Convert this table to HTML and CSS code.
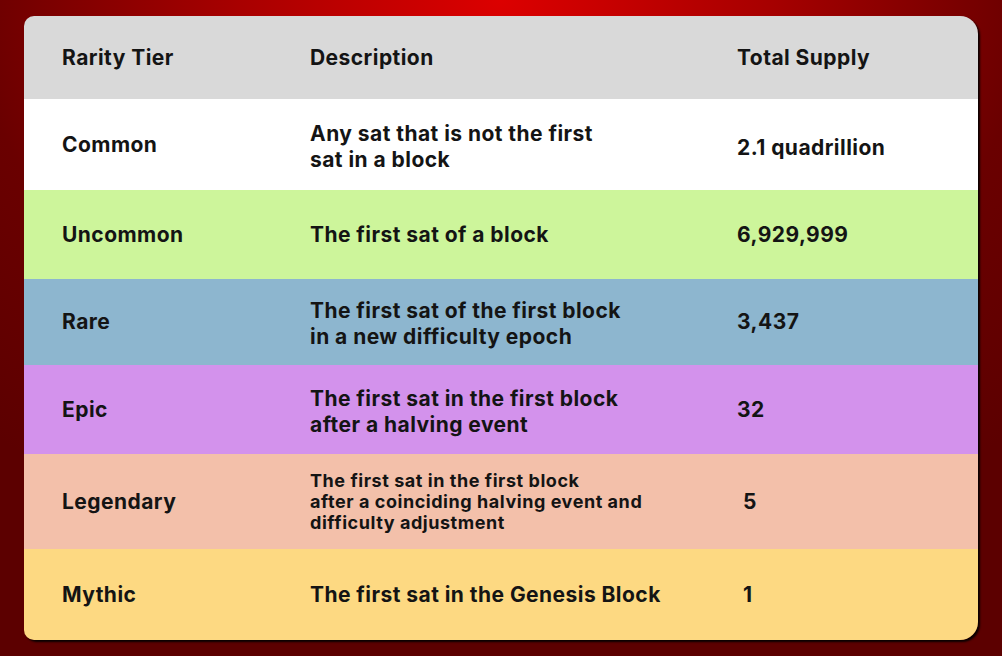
FILE: index.html
```html
<!DOCTYPE html>
<html>
<head>
<meta charset="utf-8">
<link rel="stylesheet" href="styles.css">
</head>
<body>
<div class="stage">
  <div class="card">
    <div class="row head">
      <div class="c1">Rarity Tier</div>
      <div class="c2">Description</div>
      <div class="c3">Total Supply</div>
    </div>
    <div class="row common">
      <div class="c1">Common</div>
      <div class="c2 two">Any sat that is not the first<br>sat in a block</div>
      <div class="c3 low">2.1 quadrillion</div>
    </div>
    <div class="row uncommon">
      <div class="c1">Uncommon</div>
      <div class="c2">The first sat of a block</div>
      <div class="c3">6,929,999</div>
    </div>
    <div class="row rare">
      <div class="c1">Rare</div>
      <div class="c2 two">The first sat of the first block<br>in a new difficulty epoch</div>
      <div class="c3">3,437</div>
    </div>
    <div class="row epic">
      <div class="c1">Epic</div>
      <div class="c2 two">The first sat in the first block<br>after a halving event</div>
      <div class="c3">32</div>
    </div>
    <div class="row legendary">
      <div class="c1">Legendary</div>
      <div class="c2 small">The first sat in the first block<br>after a coinciding halving event and<br>difficulty adjustment</div>
      <div class="c3 shift">5</div>
    </div>
    <div class="row mythic">
      <div class="c1">Mythic</div>
      <div class="c2">The first sat in the Genesis Block</div>
      <div class="c3 shift">1</div>
    </div>
  </div>
</div>
</body>
</html>
```
FILE: styles.css
```css
html, body {
  margin: 0;
  padding: 0;
}
body {
  width: 1002px;
  height: 656px;
  overflow: hidden;
  background: radial-gradient(ellipse 75% 90% at 50% 0%, #dc0000 0%, #a80000 35%, #6a0000 70%, #5c0000 100%);
  font-family: "Inter", "Liberation Sans", sans-serif;
  color: #141414;
}
.stage {
  padding: 16px 24px 16px 24px;
}
.card {
  width: 954px;
  border-radius: 10px 18px 18px 10px;
  overflow: hidden;
  box-shadow: 2px 2px 2px rgba(0,0,0,0.9);
}
.row {
  display: grid;
  grid-template-columns: 248px 427px 1fr;
  align-items: center;
  padding-left: 38px;
  font-size: 21px;
  font-weight: 700;
  letter-spacing: 0.45px;
  line-height: 26px;
}
.head { height: 83px; background: #d9d9d9; }
.common { height: 91px; background: #ffffff; }
.uncommon { height: 89px; background: #cdf59b; }
.rare { height: 86px; background: #8db6cf; }
.epic { height: 89px; background: #d392ec; }
.legendary { height: 95px; background: #f3c0aa; }
.mythic { height: 91px; background: #fdd982; }
.two { padding-top: 4px; }
.small {
  font-size: 18px;
  line-height: 21px;
  letter-spacing: 0.55px;
}
.low { padding-top: 6px; }
.shift { padding-left: 6px; }
```
